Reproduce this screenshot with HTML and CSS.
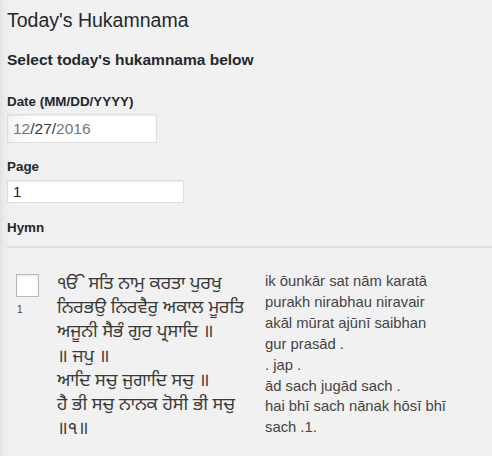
FILE: index.html
```html
<!DOCTYPE html>
<html lang="en">
<head>
<meta charset="utf-8">
<title>Today's Hukamnama</title>
<link rel="stylesheet" href="styles.css">
</head>
<body>
<div class="wrap">
  <h1 class="title">Today's Hukamnama</h1>
  <h2 class="subtitle">Select today's hukamnama below</h2>
  <div class="field">
    <div class="label">Date (MM/DD/YYYY)</div>
    <div class="input input-date">12<span class="seg">/27/</span>2016</div>
  </div>
  <div class="field field-page">
    <div class="label">Page</div>
    <div class="input input-page">1</div>
  </div>
  <div class="label label-hymn">Hymn</div>
  <div class="rule"></div>
  <div class="hymn">
    <div class="pick">
      <span class="box"></span>
      <span class="num">1</span>
    </div>
    <div class="gurmukhi">ੴ ਸਤਿ ਨਾਮੁ ਕਰਤਾ ਪੁਰਖੁ ਨਿਰਭਉ ਨਿਰਵੈਰੁ ਅਕਾਲ ਮੂਰਤਿ ਅਜੂਨੀ ਸੈਭੰ ਗੁਰ ਪ੍ਰਸਾਦਿ ॥<br>॥ ਜਪੁ ॥<br>ਆਦਿ ਸਚੁ ਜੁਗਾਦਿ ਸਚੁ ॥<br>ਹੈ ਭੀ ਸਚੁ ਨਾਨਕ ਹੋਸੀ ਭੀ ਸਚੁ ॥੧॥</div>
    <div class="translit">ik ōunkār sat nām karatā purakh nirabhau niravair akāl mūrat ajūnī saibhan gur prasād .<br>. jap .<br>ād sach jugād sach .<br>hai bhī sach nānak hōsī bhī sach .1.</div>
  </div>
</div>
</body>
</html>
```

FILE: styles.css
```css
html, body {
  margin: 0;
  padding: 0;
}
body {
  background: linear-gradient(to right, #e2e2e2 0px, #ebebeb 4px, #f1f1f1 11px) #f1f1f1;
  font-family: "Liberation Sans", Arial, sans-serif;
  color: #444;
  min-height: 456px;
}
.wrap {
  padding: 0 0 0 7px;
}
.title {
  margin: 8px 0 0;
  font-size: 19.5px;
  line-height: 24px;
  font-weight: 400;
  color: #23282d;
}
.subtitle {
  margin: 19px 0 0;
  font-size: 15.5px;
  line-height: 18px;
  font-weight: 700;
  color: #23282d;
}
.field {
  margin-top: 25px;
}
.field-page {
  margin-top: 16px;
}
.label {
  font-size: 13.4px;
  line-height: 16px;
  font-weight: 700;
  color: #23282d;
}
.input {
  box-sizing: border-box;
  margin-top: 4px;
  border: 1px solid #ddd;
  background: #fff;
  box-shadow: inset 0 1px 2px rgba(0, 0, 0, .07);
  font-size: 15px;
  color: #32373c;
  display: flex;
  align-items: center;
  padding-left: 5px;
}
.input-date {
  width: 150px;
  height: 29px;
  color: #777;
  background: linear-gradient(to right, #f4f4f4, #fff 30px);
  font-size: 15.5px;
}
.input-date .seg {
  color: #32373c;
}
.input-page {
  width: 177px;
  height: 23px;
  margin-top: 5px;
  color: #222;
}
.label-hymn {
  margin-top: 17px;
}
.rule {
  margin-top: 10px;
  height: 2px;
  background: #ddd;
}
.hymn {
  display: flex;
  align-items: flex-start;
  padding-top: 26px;
}
.pick {
  width: 50px;
  flex: none;
  display: flex;
  flex-direction: column;
  padding-left: 9px;
  box-sizing: border-box;
}
.box {
  width: 23px;
  height: 23px;
  box-sizing: border-box;
  border: 1px solid #b4b9be;
  background: #fff;
  box-shadow: inset 0 1px 2px rgba(0, 0, 0, .1);
}
.num {
  font-size: 10px;
  line-height: 12px;
  margin-top: 7px;
  padding-left: 1px;
  color: #444;
}
.gurmukhi {
  width: 192px;
  flex: none;
  font-family: "Noto Sans Gurmukhi", "Lohit Gurmukhi", "Raavi", "Noto Sans", sans-serif;
  font-size: 18px;
  line-height: 24.2px;
  color: #3a3a3a;
  margin-top: -1px;
}
.translit {
  width: 185px;
  flex: none;
  margin-left: 16px;
  font-size: 14.8px;
  line-height: 20.9px;
  color: #444;
  margin-top: -3px;
}
```
